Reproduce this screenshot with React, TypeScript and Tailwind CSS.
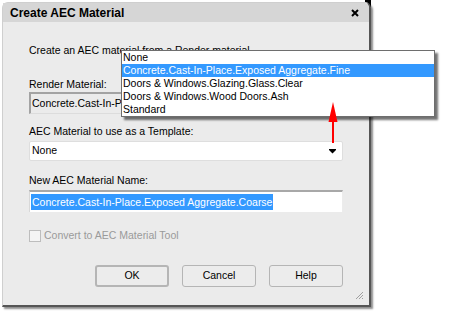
export default function App() {
  const items = [
    'None',
    'Concrete.Cast-In-Place.Exposed Aggregate.Fine',
    'Doors & Windows.Glazing.Glass.Clear',
    'Doors & Windows.Wood Doors.Ash',
    'Standard',
  ];

  return (
    <div
      className="relative w-[450px] h-[312px] bg-white overflow-hidden pl-[2px] pt-[2px] text-[10.5px] text-black"
      style={{ fontFamily: '"Liberation Sans", Arial, sans-serif' }}
    >
      {/* black corner artifact behind rounded title */}
      <div className="absolute left-[365px] top-0 w-[6px] h-[7px] bg-black" />

      {/* Dialog */}
      <div className="relative w-[369px] h-[305px] bg-[#ebebeb] rounded-t-[6px] border-l border-t border-[#cfcfcf] border-r-2 border-b-2 border-r-[#555] border-b-[#555] shadow-[2px_2px_2px_rgba(0,0,0,0.45)] flex flex-col">
        {/* Title bar */}
        <div className="h-[19px] bg-[#d6d6d6] rounded-tr-[5px] flex items-center justify-between pl-[7px] pr-[10px]">
          <span className="text-[12px] font-bold">Create AEC Material</span>
          <svg width="8" height="8" viewBox="0 0 8 8">
            <path d="M1 1 L7 7 M7 1 L1 7" stroke="#000" strokeWidth="2" />
          </svg>
        </div>

        {/* Body */}
        <div className="flex flex-col px-[26px]">
          <div className="mt-[22px] h-[13px] leading-[13px] whitespace-nowrap">
            Create an AEC material from a Render material.
          </div>

          <div className="mt-[21px] h-[13px] leading-[13px]">Render Material:</div>
          <div className="mt-px h-[22px] border-t-2 border-l-2 border-[#a3a3a3] border-r border-b border-r-[#dcdcdc] border-b-[#dcdcdc] bg-[#ebebeb] flex items-center pl-[1px] overflow-hidden whitespace-nowrap">
            Concrete.Cast-In-Place.Exposed Aggregate.Fine
          </div>

          <div className="mt-[11px] h-[13px] leading-[13px]">AEC Material to use as a Template:</div>
          <div className="mt-[3px] h-[20px] bg-white border border-[#dedede] rounded-[2px] flex items-center justify-between pl-[2px] pr-[6px]">
            <span>None</span>
            <svg width="7" height="5" viewBox="0 0 7 5">
              <path d="M0 0 H7 V1 L3.5 4.5 L0 1 Z" fill="#000" />
            </svg>
          </div>

          <div className="mt-[13px] h-[13px] leading-[13px]">New AEC Material Name:</div>
          <div className="mt-[3px] h-[22px] bg-white border-t-2 border-[#a8a8a8] border-l border-l-[#d8d8d8] border-r border-r-[#ececec] flex items-center pl-[1px]">
            <span className="bg-[#3399ff] text-white leading-[16px] whitespace-nowrap px-px">
              Concrete.Cast-In-Place.Exposed Aggregate.Coarse
            </span>
          </div>

          <div className="mt-[17px] h-[13px] flex items-center gap-[3px] text-[#9a9a9a]">
            <span className="w-[12px] h-[12px] border border-[#bdbdbd] bg-[#f4f4f4]" />
            <span className="leading-[13px]">Convert to AEC Material Tool</span>
          </div>

          <div className="mt-[23px] flex justify-end gap-[13px]">
            <button className="w-[74px] h-[22px] border-2 border-[#b5b5b5] rounded-[3px] bg-[#ececec] text-[10.5px]">
              OK
            </button>
            <button className="w-[74px] h-[22px] border border-[#b5b5b5] rounded-[3px] bg-[#ececec] text-[10.5px]">
              Cancel
            </button>
            <button className="w-[74px] h-[22px] border border-[#b5b5b5] rounded-[3px] bg-[#ececec] text-[10.5px]">
              Help
            </button>
          </div>
        </div>

        {/* resize grip */}
        <svg className="absolute right-[6px] bottom-[6px]" width="8" height="8" viewBox="0 0 8 8">
          <path d="M8 1 L1 8 M8 4 L4 8 M8 7 L7 8" stroke="#a0a0a0" strokeWidth="1" />
        </svg>
      </div>

      {/* Dropdown list (open over the dialog) */}
      <div className="absolute left-[121px] top-[50px] w-[314px] h-[67px] bg-white border border-[#6e6e6e] shadow-[3px_3px_2px_rgba(0,0,0,0.55)] flex flex-col">
        {items.map((item, i) => (
          <div
            key={item}
            className={
              i === 1
                ? 'h-[13px] leading-[13px] pl-[1px] bg-[#3399ff] text-white whitespace-nowrap'
                : 'h-[13px] leading-[13px] pl-[1px] whitespace-nowrap'
            }
          >
            {item}
          </div>
        ))}
      </div>

      {/* red arrow */}
      <svg className="absolute left-[327px] top-[102px]" width="12" height="42" viewBox="0 0 12 42">
        <path d="M6 0 L10.5 20 L1.5 20 Z" fill="#ff0000" />
        <rect x="5" y="18" width="2" height="23" fill="#ff0000" />
      </svg>
    </div>
  );
}
